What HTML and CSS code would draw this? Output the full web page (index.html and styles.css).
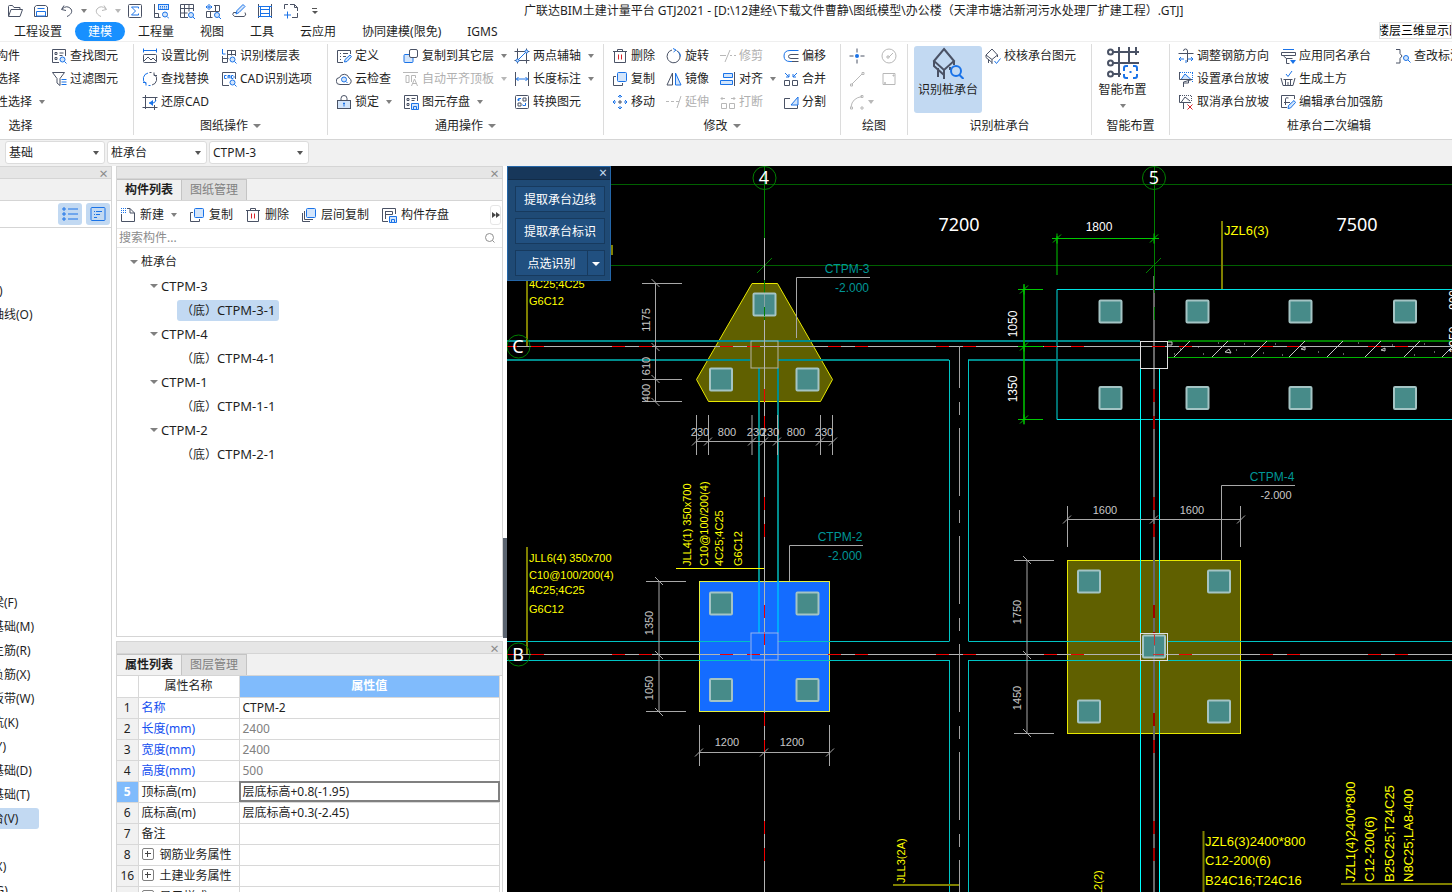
FILE: index.html
```html
<!DOCTYPE html>
<html lang="zh-CN">
<head>
  <meta charset="UTF-8">
  <meta name="viewport" content="width=device-width, initial-scale=1.0">
  <title>广联达BIM土建计量平台 GTJ2021</title>
  <link rel="stylesheet" href="styles.css">
</head>
<body>
  <!-- Icon set -->
  <svg class="defs" aria-hidden="true">
    <symbol id="i-open" viewBox="0 0 16 16"><path class="d" d="M1.5 13V3.500q0-1 1-1h3l1.500 2h6v2M1.500 13.500l2.500-7h11.500l-2.500 7z"/></symbol>
    <symbol id="i-save" viewBox="0 0 16 16"><path class="d" d="M1.500 13V4l2-1.500h9l2 1.500v9.500h-13z"/><path class="b" d="M4.500 5.500h7M3.500 8.500h9v4.500h-9z"/></symbol>
    <symbol id="i-undo" viewBox="0 0 16 16"><path class="d" d="M5 2.500L2.500 6.500l4.500 1M3 6q5-4.500 9 0c2 3-.5 6-4 7.500"/></symbol>
    <symbol id="i-redo" viewBox="0 0 16 16"><path class="d" d="M11 2.500l2.500 4-4.500 1M13 6q-5-4.500-9 0c-2 3 .5 6 4 7.500"/></symbol>
    <symbol id="i-sum" viewBox="0 0 16 16"><rect class="d" x="1.500" y="1.500" width="13" height="13" rx="1"/><path class="b" d="M11.500 5.500v-1.500h-7l4 4-4 4h7v-1.500"/></symbol>
    <symbol id="i-lookgrid" viewBox="0 0 16 16"><path class="d" d="M1.500 1v13.500h6M1.500 10.500h4v4"/><rect class="f" x="5.500" y="1.500" width="10" height="5"/><path class="b" d="M7 3.500h7M7 5h7" stroke-dasharray="1 1"/><circle class="f" cx="12" cy="11.500" r="2.500"/><path class="b" d="M14 13.500l2 2"/></symbol>
    <symbol id="i-grid" viewBox="0 0 16 16"><path class="d" d="M9 14.500H1.500v-13h13V8M1.500 5.500h13M1.500 10h7M5.500 1.500v13M10 1.500v7"/><circle class="f" cx="12" cy="12" r="2.500"/><path class="b" d="M14 14l2 2"/></symbol>
    <symbol id="i-gridplus" viewBox="0 0 16 16"><path class="d" d="M9 2.500h5.500V8M1.500 8.500h13M1.500 8.500v6h6M10.500 2v7M5.500 8.500v6"/><path class="b" d="M1 4h6M4 1v6M2.500 2.500L1 4l1.500 1.500M5.500 2.500L7 4 5.500 5.500"/><circle class="f" cx="12" cy="12" r="2.500"/><path class="b" d="M14 14l2 2"/></symbol>
    <symbol id="i-pen" viewBox="0 0 16 16"><path class="d" d="M5 9.500H2.500q-2 2 1 4h9.500q3-1 1-4"/><path class="f" d="M5 11l1-3.500 6-6 2 2-6 6z"/></symbol>
    <symbol id="i-frame" viewBox="0 0 16 16"><path class="d" d="M1.500 1v14M14.500 1v14"/><path class="b" d="M1 3.500h14M3 6.500h10M3 10.500h10M1 13.500h14M3.500 3v11M12.500 3v11"/></symbol>
    <symbol id="i-region" viewBox="0 0 16 16"><path class="d" d="M1.500 6V1.500H5M7 1.500h4.500l3 3V8M14.500 10v4.500H9M11.500 1.500v3h3"/><path class="b" d="M4.500 8.500v7M1 12h7"/></symbol>
    <symbol id="i-find" viewBox="0 0 16 16"><path class="d" d="M8 14.500H1.500v-13h13V8M4 4.500h2v2H4zM4 9.500h2v2H4zM8.500 5h4M8.500 7.500h3"/><circle class="f" cx="11.500" cy="11.500" r="2.500"/><path class="b" d="M13.500 13.500l2 2"/></symbol>
    <symbol id="i-filter" viewBox="0 0 16 16"><path class="d" d="M1.500 1.500h12L9 7.500v7L6 12V7.500z"/><path class="b" d="M10.500 8.500h5M10.500 11h5M10.500 13.500h5"/></symbol>
    <symbol id="i-scale" viewBox="0 0 16 16"><path class="b" d="M1 2.500h14M1.500.500v4M14.500.500v4"/><rect class="d" x="1.500" y="6.500" width="13" height="8" rx="1"/><path class="d" d="M2 13l4-4 3 3 2-2 3.500 3.500"/></symbol>
    <symbol id="i-floor" viewBox="0 0 16 16"><path class="b" d="M1.500 1v5h3"/><path class="d" d="M1.500 8v6.500h5M1.500 10.500h6M6.500 2v12M6.500 2.500h8V8M6.500 6.500h8M10.500 2.500v5"/><circle class="f" cx="11.500" cy="11.500" r="2.500"/><path class="b" d="M13.500 13.500l2 2"/></symbol>
    <symbol id="i-swap" viewBox="0 0 16 16"><path class="b" d="M6 2A6 6 0 0 0 3.500 12.500M1 11.500h3v3M6.500 14.500h2"/><path class="d" d="M10 14A6 6 0 0 0 12.500 3.500M15 4.500h-3v-3M7.500 1.500h2"/></symbol>
    <symbol id="i-cad" viewBox="0 0 16 16"><path class="d" d="M8 14.500H1.500v-13h13V8"/><path class="b" d="M5.500 4.500h-2v3h2M7 7.500v-3h2v3M7 6h2M10.500 4.500v3h1.500l1-1v-1l-1-1z"/><circle class="f" cx="11.500" cy="11.500" r="2.500"/><path class="b" d="M13.500 13.500l2 2"/></symbol>
    <symbol id="i-restore" viewBox="0 0 16 16"><path class="d" d="M3.500 1v14M.500 3.500h15M13.500 3v4M.500 13.500h15M12.500 11v5"/><path class="b" d="M7 9h4q2 0 3-3"/><path class="s" d="M11 6v6L7 9z"/></symbol>
    <symbol id="i-define" viewBox="0 0 16 16"><path class="d" d="M7 14.500H1.500v-12h13V6M4 5.500h1M7 5.500h5M4 8.500h1M7 8.500h3M4 11.500h1"/><path class="f" d="M8.500 14l.5-2.500 5-4.500 1.500 1.500-4.500 5z"/></symbol>
    <symbol id="i-cloud" viewBox="0 0 16 16"><path class="d" d="M4 13.500a3.500 3.500 0 0 1-.5-7A5 5 0 0 1 13 7a3.500 3.500 0 0 1 0 6.500z"/><circle class="f" cx="8" cy="8.500" r="2.500"/><path class="b" d="M10 10.500l1.500 1.500"/></symbol>
    <symbol id="i-lock" viewBox="0 0 16 16"><path class="d" d="M5 6.500v-2a3 3 0 0 1 6 0v2"/><rect class="d g" x="1.500" y="6.500" width="13" height="8"/><path class="b" d="M8 8.500v4M7 9.500h2"/></symbol>
    <symbol id="i-copyto" viewBox="0 0 16 16"><rect class="f" x="1" y="6.500" width="9" height="8" rx="1"/><rect class="d w" x="6.500" y="1.500" width="8" height="8" rx="1.500"/></symbol>
    <symbol id="i-align-top" viewBox="0 0 16 16"><path class="d" d="M0 1.500h15M3 4.500h3v7H3zM8.500 11V4.500h4V7M8.500 15l3-7 3 7M9.500 12.500h4"/></symbol>
    <symbol id="i-store" viewBox="0 0 16 16"><path class="d" d="M7 14.500H1.500v-13h13V7M4 4.500h2v2H4zM4 9.500h2v2H4zM8.500 4.500h4M8.500 6.500h3"/><path class="f" d="M8.500 9.500h7v6h-7z"/><path class="b" d="M10.500 15v-2.500h3V15"/></symbol>
    <symbol id="i-axis2" viewBox="0 0 16 16"><path class="d" d="M3.500.500v15M.500 3.500h15M12.500.500v15M.500 12.500h15"/><path class="b" d="M3.500 12.500l9-9"/><circle class="f" cx="12.500" cy="3.500" r="1.500"/><circle class="f" cx="3.500" cy="12.500" r="1.500"/></symbol>
    <symbol id="i-length" viewBox="0 0 16 16"><path class="d" d="M1.500 1v14M14.500 1v14"/><path class="b" d="M2 8h12M4.500 6L2.500 8l2 2M11.500 6l2 2-2 2"/></symbol>
    <symbol id="i-convert" viewBox="0 0 16 16"><rect class="d" x="1.500" y="1.500" width="13" height="13" rx="1"/><path class="d" d="M4 9h3v3H4zM9 4h3v3H9z"/><path class="b" d="M4.500 6.500V4.500H7M11.500 9v2.500H9M3.500 5.500l1 1.500 1-1.500M8.500 10.500L9.500 12"/></symbol>
    <symbol id="i-del" viewBox="0 0 16 16"><path class="d" d="M1 3.500h14M5.500 3V1.500h5V3M2.500 4v10.500h11V4"/><path class="r" d="M6.500 6.500v5M9.500 6.500v5"/></symbol>
    <symbol id="i-copy" viewBox="0 0 16 16"><path class="d" d="M4 5.500H1.500v9h9V12"/><rect class="f" x="5.500" y="1.500" width="9" height="9" rx="1"/></symbol>
    <symbol id="i-move" viewBox="0 0 16 16"><path class="b" d="M8 1v3M8 12v3M1 8h3M12 8h3M6 3l2-2 2 2M6 13l2 2 2-2M3 6L1 8l2 2M13 6l2 2-2 2"/><path class="d" d="M8 6v4M6 8h4"/></symbol>
    <symbol id="i-rotate" viewBox="0 0 16 16"><path class="d" d="M10.500 2.500A6.500 6.500 0 1 1 6 2"/><path class="b" d="M7 .500l3 1.500-2.500 2M12 3.500q2.500 2 2.500 5"/></symbol>
    <symbol id="i-mirror" viewBox="0 0 16 16"><path class="d" d="M6.500 2v12H1z"/><path class="f" d="M9.500 2v12H15z"/></symbol>
    <symbol id="i-trim" viewBox="0 0 16 16"><path class="d" d="M0 7.500h6M5 14L10 2M10 7.500h2M14 7.500h2"/></symbol>
    <symbol id="i-extend" viewBox="0 0 16 16"><path class="d" d="M0 7.500h3M5 7.500h3M11 14l4-12M10 7.500h3"/></symbol>
    <symbol id="i-align" viewBox="0 0 16 16"><path class="d" d="M14.500 1v14"/><path class="f" d="M3.500 2.500h9v4h-9zM.500 9.500h12v4H.500z"/></symbol>
    <symbol id="i-break" viewBox="0 0 16 16"><path class="d" d="M1.500 9.500h5v5h-5zM9.500 9.500h5v5h-5zM5 4.500H1M2.500 3L1 4.500 2.500 6M11 4.500h4M13.500 3L15 4.500 13.500 6"/></symbol>
    <symbol id="i-merge" viewBox="0 0 16 16"><path class="d" d="M1.500 9.500h5v5h-5zM9.500 9.500h5v5h-5z"/><path class="b" d="M2 2l4 4M6 3v3H3M14 2l-4 4M10 3v3h3"/></symbol>
    <symbol id="i-offset" viewBox="0 0 16 16"><path class="b" d="M15.500 2.500H7q-6 0-6 5.500t6 5.500h3"/><path class="d" d="M15.500 6.500H8q-2.500 0-2.500 2t2.500 2h7.500M9 13.500h6.500"/></symbol>
    <symbol id="i-split" viewBox="0 0 16 16"><path class="d" d="M7 4.500H1.500v10h13V9"/><path class="f" d="M8 11l7-8v8z"/></symbol>
    <symbol id="i-point" viewBox="0 0 16 16"><path class="d" d="M8 .500v4M8 11.500v4M.500 8h4M11.500 8h4"/><circle class="s" cx="8" cy="8" r="2"/></symbol>
    <symbol id="i-circle" viewBox="0 0 16 16"><circle class="d" cx="8" cy="8" r="7"/><path class="d" d="M8 9l4-4M6 8h2v2H6z"/></symbol>
    <symbol id="i-line" viewBox="0 0 16 16"><path class="d" d="M3 13L13 3M1.500 13h2v2h-2zM13 1.500h2v2h-2z"/></symbol>
    <symbol id="i-rect" viewBox="0 0 16 16"><path class="d" d="M2 2.500h12v11H2zM3.500 11.500h1v1h-1zM12 4h1v1h-1z"/></symbol>
    <symbol id="i-arc" viewBox="0 0 16 16"><path class="d" d="M2 13Q3 4 13 2.500M1.500 13h2v2h-2zM12 1.500h2v2h-2zM12 13h2v2h-2z"/></symbol>
    <symbol id="i-cap" viewBox="0 0 32 32"><path class="d2" d="M12 2l10 12-10 9L2 14zM2 14v5l10 9M22 14v4M12 23v9M6 21v9M18 20v3"/><circle class="b2" cx="24" cy="24" r="5"/><path class="b2" d="M27.500 28l4 4"/></symbol>
    <symbol id="i-check" viewBox="0 0 16 16"><path class="d" d="M7 1l5.500 6L7 11.500 1 7zM1 7v2.500l6 5M12.500 7v2M7 11.500V16M3.500 11v4"/><path class="b" d="M9.500 13l2 2.500 4-5"/></symbol>
    <symbol id="i-smart" viewBox="0 0 32 32"><path class="d2" d="M6 5h26M6 16h26M6 27h8M12 0v30M22 0v15M29 0v8"/><circle class="d2" cx="3.500" cy="5" r="2.500"/><circle class="d2" cx="3.500" cy="16" r="2.500"/><circle class="d2" cx="3.500" cy="27" r="2.500"/><path class="b2" d="M17 24v-3q0-2 2-2h2M26 19h2q2 0 2 2v3M30 27v2q0 2-2 2h-2M21 31h-2q-2 0-2-2v-2M23.500 24v2"/></symbol>
    <symbol id="i-rebar" viewBox="0 0 16 16"><path class="d" d="M.500 5.500h15M5.500 3q0-2 2-2t2 2v11"/><path class="b" d="M1 11h5M3 9l-2 2 2 2M10 11h5M13 9l2 2-2 2M8 12v3"/></symbol>
    <symbol id="i-slope" viewBox="0 0 16 16"><path class="b" d="M2 1.500h13M14.500 2v9" stroke-dasharray="1 1"/><path class="f" d="M3 8.500l4-5.500 6 5.500z"/><path class="d" d="M1.500 1v7.500H14L5.500 11v5M5.500 12h5V9"/></symbol>
    <symbol id="i-unslope" viewBox="0 0 16 16"><path class="d" d="M1.500 1v7.500H13M3 8.500L7 3l5 4M5.500 9v6"/><path class="d" d="M2 1.500h12M13.500 2v6" stroke-dasharray="1 1"/><path class="r" d="M9.500 10.500l5 5M14.500 10.500l-5 5"/></symbol>
    <symbol id="i-apply" viewBox="0 0 16 16"><path class="b" d="M3 1.500h11"/><path class="d" d="M1.500 4.500h14v3h-14zM3.500 8l3 2.500h6M6.500 10v5.500h3"/><path class="s" d="M10 12h6l-3 4z"/></symbol>
    <symbol id="i-earth" viewBox="0 0 16 16"><path class="b" d="M6 3l2 2.500L12 0"/><path class="d" d="M1 7l2 7.500h10L15 7M3.500 8.500h9M5.500 14V9M8 14v-3M10.500 14V9"/></symbol>
    <symbol id="i-edit" viewBox="0 0 16 16"><path class="d" d="M7 13.500H1.500v-12h13V5M4 8.500h6M5.500 11V5q0-2 3-1"/><path class="f" d="M8 14.500l.5-3 5.500-5 1.500 2-5 5.500z"/></symbol>
    <symbol id="i-mark" viewBox="0 0 16 16"><path class="d" d="M1 1.500h4v4l2 2.500-2 2.500V15H1"/><circle class="f" cx="11" cy="10" r="2.500"/><path class="b" d="M13 12l2.500 2.500"/></symbol>
    <symbol id="i-new" viewBox="0 0 16 16"><path class="d" d="M1.500 7v7.500h13V6L10 1.500H7M10 1.500V6h4.500"/><path class="b" d="M1 1.500h5M1 3.500h5M1 5.500h5" stroke-dasharray="1 1"/></symbol>
    <symbol id="i-layers" viewBox="0 0 16 16"><path class="d" d="M1.500 6v8.500H9M3.500 4v8.500H12"/><rect class="f" x="5.500" y="1.500" width="9" height="9" rx="1"/></symbol>
    <symbol id="i-compstore" viewBox="0 0 16 16"><path class="d" d="M7 14.500H1.500v-13h13V7M4.500 4v8M4.500 7.500h7M4.500 4.500h7v3"/><path class="f" d="M8.500 9.500h7v6h-7z"/><path class="b" d="M10.500 15v-2.500h3V15"/></symbol>
    <symbol id="i-list" viewBox="0 0 16 16"><path class="b" d="M1 2h2v2H1zM1 7h2v2H1zM1 12h2v2H1zM6 3h10M6 8h10M6 13h10"/></symbol>
    <symbol id="i-detail" viewBox="0 0 16 16"><rect class="b" x="1" y="1.500" width="14" height="13" rx="1"/><path class="b" d="M4 5.500h1M6 5.500h6M4 8.500h1M6 8.500h4M4 11.500h3"/></symbol>
    <symbol id="i-search" viewBox="0 0 16 16"><circle class="d" cx="7.500" cy="7.500" r="4"/><path class="d" d="M10.500 10.500l2 2"/></symbol>
  </svg>

  <header class="titlebar">
    <div class="quick">
      <button aria-label="打开"><svg><use href="#i-open"/></svg></button>
      <button aria-label="保存"><svg><use href="#i-save"/></svg></button>
      <button aria-label="撤销"><svg><use href="#i-undo"/></svg></button>
      <i class="caret"></i>
      <button aria-label="恢复" class="off"><svg><use href="#i-redo"/></svg></button>
      <i class="caret off"></i>
      <button aria-label="汇总"><svg><use href="#i-sum"/></svg></button>
      <button aria-label="查看工程量"><svg><use href="#i-lookgrid"/></svg></button>
      <button aria-label="查看报表"><svg><use href="#i-grid"/></svg></button>
      <button aria-label="查看计算式"><svg><use href="#i-gridplus"/></svg></button>
      <button aria-label="编辑"><svg><use href="#i-pen"/></svg></button>
      <button aria-label="钢筋三维"><svg><use href="#i-frame"/></svg></button>
      <button aria-label="区域"><svg><use href="#i-region"/></svg></button>
      <i class="more"></i>
    </div>
    <h1 class="title">广联达BIM土建计量平台 GTJ2021 - [D:\12建经\下载文件曹静\图纸模型\办公楼（天津市塘沽新河污水处理厂扩建工程）.GTJ]</h1>
  </header>

  <nav class="tabs">
    <button>工程设置</button>
    <button class="active">建模</button>
    <button>工程量</button>
    <button>视图</button>
    <button>工具</button>
    <button>云应用</button>
    <button>协同建模(限免)</button>
    <button>IGMS</button>
    <div class="tip"><span>楼层三维显示图</span></div>
  </nav>

  <section class="ribbon">
    <div class="group g-select">
      <div class="tools">
        <button>构件</button>
        <button><svg><use href="#i-find"/></svg>查找图元</button>
        <button>选择</button>
        <button><svg><use href="#i-filter"/></svg>过滤图元</button>
        <button>性选择<i class="caret"></i></button>
      </div>
      <div class="label">选择</div>
    </div>
    <div class="group g-drawing">
      <div class="tools">
        <button><svg><use href="#i-scale"/></svg>设置比例</button>
        <button><svg><use href="#i-floor"/></svg>识别楼层表</button>
        <button><svg><use href="#i-swap"/></svg>查找替换</button>
        <button><svg><use href="#i-cad"/></svg>CAD识别选项</button>
        <button><svg><use href="#i-restore"/></svg>还原CAD</button>
      </div>
      <div class="label">图纸操作<i class="caret"></i></div>
    </div>
    <div class="group g-common">
      <div class="tools">
        <button><svg><use href="#i-define"/></svg>定义</button>
        <button><svg><use href="#i-copyto"/></svg>复制到其它层<i class="caret"></i></button>
        <button><svg><use href="#i-axis2"/></svg>两点辅轴<i class="caret"></i></button>
        <button><svg><use href="#i-cloud"/></svg>云检查</button>
        <button class="off"><svg><use href="#i-align-top"/></svg>自动平齐顶板<i class="caret"></i></button>
        <button><svg><use href="#i-length"/></svg>长度标注<i class="caret"></i></button>
        <button><svg><use href="#i-lock"/></svg>锁定<i class="caret"></i></button>
        <button><svg><use href="#i-store"/></svg>图元存盘<i class="caret"></i></button>
        <button><svg><use href="#i-convert"/></svg>转换图元</button>
      </div>
      <div class="label">通用操作<i class="caret"></i></div>
    </div>
    <div class="group g-modify">
      <div class="tools">
        <button><svg><use href="#i-del"/></svg>删除</button>
        <button><svg><use href="#i-rotate"/></svg>旋转</button>
        <button class="off"><svg><use href="#i-trim"/></svg>修剪</button>
        <button><svg><use href="#i-offset"/></svg>偏移</button>
        <button><svg><use href="#i-copy"/></svg>复制</button>
        <button><svg><use href="#i-mirror"/></svg>镜像</button>
        <button><svg><use href="#i-align"/></svg>对齐<i class="caret"></i></button>
        <button><svg><use href="#i-merge"/></svg>合并</button>
        <button><svg><use href="#i-move"/></svg>移动</button>
        <button class="off"><svg><use href="#i-extend"/></svg>延伸</button>
        <button class="off"><svg><use href="#i-break"/></svg>打断</button>
        <button><svg><use href="#i-split"/></svg>分割</button>
      </div>
      <div class="label">修改<i class="caret"></i></div>
    </div>
    <div class="group g-draw">
      <div class="tools">
        <button aria-label="点"><svg><use href="#i-point"/></svg></button>
        <button aria-label="圆" class="off"><svg><use href="#i-circle"/></svg></button>
        <button aria-label="直线" class="off"><svg><use href="#i-line"/></svg></button>
        <button aria-label="矩形" class="off"><svg><use href="#i-rect"/></svg></button>
        <button aria-label="弧" class="off"><svg><use href="#i-arc"/></svg><i class="caret tight"></i></button>
      </div>
      <div class="label">绘图</div>
    </div>
    <div class="group g-identify">
      <div class="tools">
        <button class="big active"><svg><use href="#i-cap"/></svg>识别桩承台</button>
        <button><svg><use href="#i-check"/></svg>校核承台图元</button>
      </div>
      <div class="label">识别桩承台</div>
    </div>
    <div class="group g-smart">
      <div class="tools">
        <button class="big"><svg><use href="#i-smart"/></svg>智能布置<i class="caret"></i></button>
      </div>
      <div class="label">智能布置</div>
    </div>
    <div class="group g-cap">
      <div class="tools">
        <button><svg><use href="#i-rebar"/></svg>调整钢筋方向</button>
        <button><svg><use href="#i-apply"/></svg>应用同名承台</button>
        <button><svg><use href="#i-mark"/></svg>查改标注</button>
        <button><svg><use href="#i-slope"/></svg>设置承台放坡</button>
        <button><svg><use href="#i-earth"/></svg>生成土方</button>
        <span></span>
        <button><svg><use href="#i-unslope"/></svg>取消承台放坡</button>
        <button><svg><use href="#i-edit"/></svg>编辑承台加强筋</button>
      </div>
      <div class="label">桩承台二次编辑</div>
    </div>
  </section>

  <div class="selectors">
    <select aria-label="构件大类"><option>基础</option></select>
    <select aria-label="构件类型"><option>桩承台</option></select>
    <select aria-label="构件名称"><option>CTPM-3</option></select>
  </div>

  <main class="workspace">
    <aside class="nav panel">
      <div class="panel-bar"><button aria-label="关闭">×</button></div>
      <div class="nav-band"></div>
      <div class="nav-tools">
        <button aria-label="列表"><svg><use href="#i-list"/></svg></button>
        <button aria-label="详情"><svg><use href="#i-detail"/></svg></button>
      </div>
      <ul class="nav-list">
        <li>轴网(J)</li>
        <li>辅助轴线(O)</li>
      </ul>
      <ul class="nav-list base">
        <li>基础梁(F)</li>
        <li>筏板基础(M)</li>
        <li>筏板主筋(R)</li>
        <li>筏板负筋(X)</li>
        <li>基础板带(W)</li>
        <li>集水坑(K)</li>
        <li>柱墩(Y)</li>
        <li>独立基础(D)</li>
        <li>条形基础(T)</li>
        <li class="current"><span>桩承台(V)</span></li>
        <li></li>
        <li>垫层(X)</li>
        <li>地沟(G)</li>
      </ul>
    </aside>

    <div class="side">
      <section class="panel components">
        <div class="panel-bar"><button aria-label="关闭">×</button></div>
        <div class="panel-tabs"><button class="active">构件列表</button><button>图纸管理</button></div>
        <div class="panel-tools">
          <button><svg><use href="#i-new"/></svg>新建<i class="caret"></i></button>
          <button><svg><use href="#i-copy"/></svg>复制</button>
          <button><svg><use href="#i-del"/></svg>删除</button>
          <button><svg><use href="#i-layers"/></svg>层间复制</button>
          <button><svg><use href="#i-compstore"/></svg>构件存盘</button>
          <button class="overflow" aria-label="更多"><i></i><i></i></button>
        </div>
        <div class="search">
          <input type="text" aria-label="搜索构件" placeholder="搜索构件...">
          <svg><use href="#i-search"/></svg>
        </div>
        <ul class="tree">
          <li><i class="caret"></i>桩承台</li>
          <li class="lv2"><i class="caret"></i>CTPM-3</li>
          <li class="lv3 current"><span><small>（底）</small>CTPM-3-1</span></li>
          <li class="lv2"><i class="caret"></i>CTPM-4</li>
          <li class="lv3"><span><small>（底）</small>CTPM-4-1</span></li>
          <li class="lv2"><i class="caret"></i>CTPM-1</li>
          <li class="lv3"><span><small>（底）</small>CTPM-1-1</span></li>
          <li class="lv2"><i class="caret"></i>CTPM-2</li>
          <li class="lv3"><span><small>（底）</small>CTPM-2-1</span></li>
        </ul>
      </section>

      <section class="panel props">
        <div class="panel-bar"><button aria-label="关闭">×</button></div>
        <div class="panel-tabs"><button class="active">属性列表</button><button>图层管理</button></div>
        <table>
          <thead>
            <tr><th class="num"></th><th class="name">属性名称</th><th class="value">属性值</th></tr>
          </thead>
          <tbody>
            <tr><th>1</th><td class="key">名称</td><td>CTPM-2</td></tr>
            <tr><th>2</th><td class="key">长度(mm)</td><td class="ro">2400</td></tr>
            <tr><th>3</th><td class="key">宽度(mm)</td><td class="ro">2400</td></tr>
            <tr><th>4</th><td class="key">高度(mm)</td><td class="ro">500</td></tr>
            <tr class="current"><th>5</th><td>顶标高(m)</td><td class="editing">层底标高+0.8(-1.95)</td></tr>
            <tr><th>6</th><td>底标高(m)</td><td>层底标高+0.3(-2.45)</td></tr>
            <tr><th>7</th><td>备注</td><td></td></tr>
            <tr><th>8</th><td><button class="plus" aria-label="展开"></button>钢筋业务属性</td><td></td></tr>
            <tr><th>16</th><td><button class="plus" aria-label="展开"></button>土建业务属性</td><td></td></tr>
            <tr><th></th><td><button class="plus" aria-label="展开"></button>显示样式</td><td></td></tr>
          </tbody>
        </table>
      </section>
    </div>

    <div class="splitter"><div class="handle"></div></div>

    <section class="canvas">
      <svg class="cad" viewBox="507 166 945 726" preserveAspectRatio="xMinYMin slice">
        <defs>
          <marker id="tick-h" markerUnits="userSpaceOnUse" markerWidth="12" markerHeight="12" refX="6" refY="6"><path class="tick" d="M2 10L10 2"/></marker>
          <marker id="tick-v" markerUnits="userSpaceOnUse" markerWidth="12" markerHeight="12" refX="6" refY="6"><path class="tick" d="M2 2L10 10"/></marker>
          <marker id="tick-g" markerUnits="userSpaceOnUse" markerWidth="12" markerHeight="12" refX="6" refY="6"><path class="tick-green" d="M2 10L10 2M1 6h10M6 1v10"/></marker>
          <rect id="pile" class="pile" x="-11" y="-11" width="22" height="22" rx="1"/>
        </defs>

        <!-- dimension axes along the top -->
        <path class="axis-dim" d="M507 184.500H1452M507 265.500H1452"/>
        <path class="axis-tick" d="M757 273l15-15M1146 273l15-15"/>
        <path class="axis-green" d="M764.500 166V240M1154.500 166V290"/>

        <!-- pile caps -->
        <path class="cap" d="M752 283.500H777.500L832.500 379.500L820.500 401.500H708.500L696.500 379.500Z"/>
        <rect class="cap" x="1067.500" y="560.500" width="173" height="173"/>
        <rect class="cap-selected" x="699.500" y="581.500" width="130" height="130"/>
        <path class="cap-outline" d="M1452 289.500H1057V419.500H1452"/>

        <!-- beams -->
        <path class="beam-dim" d="M507 341H1140M507 360H750M778 360H949M968 360H1140M759 368V581M778 368V581"/>
        <path class="beam" d="M507 641.500H750M778 641.500H949.500M968.500 641.500H1140M1168 641.500H1452M507 660.500H750M778 660.500H949.500M968.500 660.500H1140M1168 660.500H1452M949.500 360V641M968.500 360V641M949.500 660V892M968.500 660V892"/>
        <path class="beam-over" d="M759 581V633M778 581V633"/>
        <path class="beam-lit" d="M1140.500 368V633M1159.500 368V633M1140.500 660V892M1159.500 660V892"/>

        <!-- axes B, C, 4, 5 -->
        <path class="axis" d="M507 346.500H1452M507 654.500H1452M764.500 238V892"/>
        <path class="axis-thick" d="M1154 276V892"/>
        <path class="axis-mid" d="M959.500 346V892"/>
        <path class="axis-green" d="M764.500 280V293M764.500 307V320M1154.500 276V293M1154.500 307V320"/>
        <path class="axis-red" d="M504 346.500H1452M504 654.500H1452M764.500 389V892"/>
        <path class="axis-red deep" d="M1154 389V892"/>

        <!-- concrete wall -->
        <path class="wall-top" d="M1168 341H1452"/>
        <path class="wall-bottom" d="M1168 357.500H1452"/>
        <path class="hatch" d="M1174 357l16-16M1212 357l16-16M1251 357l16-16M1289 357l16-16M1327 357l16-16M1365 357l16-16M1404 357l16-16M1442 357l10-10M1225 352l4-3 2 4zM1301 349l4-2v3zM1381 350l4-2v3zM1168 342h4v3h-4"/>
        <path class="dots" d="M1180 349h1M1203 354h1M1218 343h1M1236 350h1M1244 344h1M1275 344h1M1282 355h1M1318 352h1M1343 354h1M1358 343h1M1392 345h1M1424 344h1M1434 352h1M1174 354h1M1198 347h1M1263 353h1M1414 355h1"/>

        <!-- columns -->
        <rect class="column soft" x="751" y="341" width="27" height="27"/>
        <rect class="column pale" x="751" y="633" width="27" height="27"/>
        <rect class="column" x="1140.500" y="341.500" width="27" height="27"/>

        <!-- piles -->
        <g>
          <use href="#pile" x="764.500" y="304.500"/><use href="#pile" x="721" y="379.500"/><use href="#pile" x="807.500" y="379.500"/>
          <use href="#pile" x="721" y="603.500"/><use href="#pile" x="807.500" y="603.500"/>
          <use href="#pile" x="721" y="690"/><use href="#pile" x="807.500" y="690"/>
          <use href="#pile" x="1110.500" y="311.500"/><use href="#pile" x="1197.500" y="311.500"/><use href="#pile" x="1300.500" y="311.500"/><use href="#pile" x="1405" y="311.500"/>
          <use href="#pile" x="1110.500" y="398"/><use href="#pile" x="1197.500" y="398"/><use href="#pile" x="1300.500" y="398"/><use href="#pile" x="1405" y="398"/>
          <use href="#pile" x="1089" y="581.500"/><use href="#pile" x="1219" y="581.500"/>
          <use href="#pile" x="1089" y="711.500"/><use href="#pile" x="1219" y="711.500"/>
          <use href="#pile" x="1154" y="646.500"/>
        </g>
        <rect class="column" x="1140.500" y="633.500" width="27" height="27"/>
        <path class="axis faint" d="M764.500 293V316M1154.500 646V658"/>
        <path class="axis-green" d="M764.500 307V316"/>
        <path class="axis-over" d="M1154.500 635V645M1153 654.500H1164"/>

        <!-- dimension lines -->
        <g class="dim">
          <path class="v" d="M655.500 283V347V379V402"/>
          <path d="M642 283.500h40M642 379.500h40M642 401.500h40"/>
          <path class="h" d="M696 441.500H708H752H764H777H820H833"/>
          <path d="M696.500 415v40M708.500 415v40M752 415v40M777.500 415v40M820.500 415v40M832.500 415v40"/>
          <path class="v" d="M659 581V655V712"/>
          <path d="M646 581.500h40M646 711.500h40"/>
          <path class="h" d="M699 752.500H764H830"/>
          <path d="M699.500 725v41M829.500 725v41"/>
          <path class="h" d="M1067 519.500H1154H1241"/>
          <path d="M1067.500 506v41M1240.500 506v41"/>
          <path class="v" d="M1027 560V655V733"/>
          <path d="M1014 560.500h40M1014 733.500h40"/>
          <path d="M796.500 338V277.500H870M789.500 581V545.500H863M1221.500 560V485.500H1295"/>
        </g>
        <g class="dim-green">
          <path class="h" d="M1057 238.500H1154"/>
          <path d="M1057 236V275"/>
          <path class="h" d="M1024 289.500V346.500V419.500"/>
          <path d="M1018 289.500h25M1018 346.500h25M1018 419.500h25M1024 284V424"/>
        </g>
        <g class="leader">
          <path class="dim-yellow" d="M527 281V346M527 547V654M1222 221V289M1203.500 831V892M1341 884H1452M893 885H959M612 245v10"/>
          <path class="lit" d="M676 568.500H764"/>
        </g>

        <!-- axis bubbles -->
        <g class="bubble">
          <circle cx="764.500" cy="178" r="11.500"/><circle cx="1154" cy="178" r="11.500"/>
          <circle cx="518.500" cy="346.500" r="11.500"/><circle cx="518.500" cy="654.500" r="11.500"/>
          <text x="764" y="184">4</text><text x="1154" y="184">5</text>
          <text x="518" y="353">C</text><text x="518" y="661">B</text>
        </g>
        <g class="span">
          <text x="959" y="231">7200</text><text x="1357" y="231">7500</text>
        </g>

        <!-- dimension texts -->
        <g class="num-text">
          <text x="700" y="436">230</text><text x="727" y="436">800</text><text x="756" y="436">230</text>
          <text x="770" y="436">230</text><text x="796" y="436">800</text><text x="824" y="436">230</text>
          <text x="727" y="746">1200</text><text x="792" y="746">1200</text>
          <text x="1105" y="514">1600</text><text x="1192" y="514">1600</text>
          <text x="1276" y="499">-2.000</text>
          <text transform="translate(650 320) rotate(-90)">1175</text>
          <text transform="translate(650 366) rotate(-90)">610</text>
          <text transform="translate(650 393) rotate(-90)">400</text>
          <text transform="translate(653 623) rotate(-90)">1350</text>
          <text transform="translate(653 688) rotate(-90)">1050</text>
          <text transform="translate(1021 612) rotate(-90)">1750</text>
          <text transform="translate(1021 698) rotate(-90)">1450</text>
        </g>
        <g class="num-text lit">
          <text x="1099" y="231">1800</text>
          <text transform="translate(1017 324) rotate(-90)">1050</text>
          <text transform="translate(1017 389) rotate(-90)">1350</text>
          <text transform="translate(1458 300) rotate(-90)">800</text>
          <text transform="translate(1458 340) rotate(-90)">1050</text>
        </g>
        <g class="cap-name">
          <text x="847" y="273">CTPM-3</text><text x="852" y="292">-2.000</text>
          <text x="840" y="541">CTPM-2</text><text x="845" y="560">-2.000</text>
          <text x="1272" y="481">CTPM-4</text>
        </g>
        <g class="note">
          <text x="529" y="288">4C25;4C25</text><text x="529" y="305">G6C12</text>
          <text x="529" y="562">JLL6(4) 350x700</text><text x="529" y="579">C10@100/200(4)</text>
          <text x="529" y="594">4C25;4C25</text><text x="529" y="613">G6C12</text>
          <text transform="translate(691 566) rotate(-90)">JLL4(1) 350x700</text>
          <text transform="translate(708 566) rotate(-90)">C10@100/200(4)</text>
          <text transform="translate(723 566) rotate(-90)">4C25;4C25</text>
          <text transform="translate(742 566) rotate(-90)">G6C12</text>
          <text transform="translate(905 883) rotate(-90)">JLL3(2A)</text>
          <text transform="translate(1102 896) rotate(-90)">L2(2)</text>
        </g>
        <g class="note large">
          <text x="1224" y="235">JZL6(3)</text>
          <text x="1205" y="846">JZL6(3)2400*800</text><text x="1205" y="865">C12-200(6)</text><text x="1205" y="885">B24C16;T24C16</text>
          <text transform="translate(1355 882) rotate(-90)">JZL1(4)2400*800</text>
          <text transform="translate(1374 882) rotate(-90)">C12-200(6)</text>
          <text transform="translate(1394 882) rotate(-90)">B25C25;T24C25</text>
          <text transform="translate(1413 882) rotate(-90)">N8C25;LA8-400</text>
        </g>
      </svg>

      <div class="float">
        <div class="float-bar"><button aria-label="关闭">×</button></div>
        <div class="float-body">
          <button>提取承台边线</button>
          <button>提取承台标识</button>
          <div class="split"><button>点选识别</button><button aria-label="展开"><i class="caret"></i></button></div>
        </div>
      </div>
    </section>
  </main>
</body>
</html>
```

FILE: styles.css
```css
:root {
  --ink: #4a5265;
  --blue: #1a73e8;
  --pale: #d3e5fb;
  --red: #d8232a;
  --line: #d5d5d5;
  --hover: #c2d9f2;
}
* {
  box-sizing: border-box;
}
body {
  margin: 0;
  height: 100vh;
  display: flex;
  flex-direction: column;
  overflow: hidden;
  background: #fff;
  color: #1f1f1f;
  font: 12px/16px "Noto Sans", "Noto Sans CJK SC", sans-serif;
}
button, input, select {
  font: inherit;
  color: inherit;
}
button {
  display: flex;
  align-items: center;
  padding: 0;
  border: 0;
  background: none;
  white-space: nowrap;
}
ul {
  list-style: none;
  margin: 0;
  padding: 0;
}
svg {
  display: block;
  width: 16px;
  height: 16px;
  flex: none;
}
.defs {
  position: absolute;
  width: 0;
  height: 0;
}

/* icon strokes */
.d, .b, .r, .f, .d2, .b2 {
  fill: none;
  stroke: var(--ink);
}
.b, .f, .b2 {
  stroke: var(--blue);
}
.f, .g {
  fill: var(--pale);
}
.w {
  fill: #fff;
}
.r {
  stroke: var(--red);
}
.s {
  fill: var(--blue);
}
.d2, .b2 {
  stroke-width: 2;
}
.off {
  --ink: #b8b8b8;
  color: #b0b0b0;
}
.caret {
  flex: none;
  border: 3px solid transparent;
  border-top: 4px solid #808080;
  border-bottom: 0;
}
.off .caret, .caret.off {
  border-top-color: #b8b8b8;
}

/* title bar */
.titlebar {
  display: flex;
  flex: 0 0 21px;
}
.quick {
  flex: 0 0 524px;
  display: flex;
  align-items: center;
  padding-left: 2px;
}
.quick button {
  padding: 0 5px;
}
.quick .caret {
  margin: 0 1px;
}
.quick .more {
  margin-left: 7px;
  width: 7px;
  height: 6px;
  background: linear-gradient(#555, #555) top / 5px 1px no-repeat;
  display: flex;
  align-items: flex-end;
  justify-content: center;
}
.more::after {
  content: "";
  border: 3px solid transparent;
  border-top: 3px solid #555;
  border-bottom: 0;
}
.title {
  margin: 0;
  font-size: 12px;
  font-weight: 400;
  line-height: 21px;
  white-space: nowrap;
}

/* menu tabs */
.tabs {
  display: flex;
  flex: 0 0 21px;
  padding: 1px 0 0 1px;
  border-bottom: 1px solid #efefef;
}
.tabs button {
  padding: 0 13px;
}
.tabs .active {
  border-radius: 10px;
  background: #1890ff;
  color: #fff;
}
.tip {
  width: 73px;
  margin-left: auto;
  height: 17px;
  padding-left: 1px;
  border: 1px solid #e0e0e0;
  color: #000;
  white-space: nowrap;
  overflow: hidden;
}
.tip span {
  margin-left: -4px;
}

/* ribbon */
.ribbon {
  display: flex;
  flex: 0 0 98px;
  padding-top: 2px;
  border-bottom: 1px solid var(--line);
  margin-left: -92px;
}
.group {
  flex: none;
  display: flex;
  flex-direction: column;
  justify-content: space-between;
  padding: 0 0 2px 8px;
  border-right: 1px solid #dcdcdc;
  margin-bottom: 4px;
}
.group:last-child {
  border-right: 0;
}
.tools {
  display: grid;
  grid-auto-rows: 23px;
}
.tools button {
  gap: 3px;
}
.tools .caret {
  margin-left: 4px;
}
.tools .caret.tight {
  margin-left: 0;
}
.label {
  display: flex;
  align-items: center;
  justify-content: center;
  gap: 5px;
  margin-left: -8px;
  line-height: 15px;
}
.label .caret {
  border-width: 4px 4px 0;
}
.g-select {
  width: 226px;
}
.g-select .tools {
  grid-template-columns: 55px 1fr;
  padding-left: 80px;
}
.g-drawing {
  width: 194px;
}
.g-drawing .tools {
  grid-template-columns: 79px 1fr;
}
.g-common {
  width: 276px;
}
.g-common .tools {
  grid-template-columns: 67px 111px 1fr;
}
.g-modify {
  width: 237px;
}
.g-modify .tools {
  grid-template-columns: 54px 54px 63px 1fr;
}
.g-draw {
  width: 67px;
}
.g-draw .tools {
  grid-template-columns: 32px 1fr;
}
.g-identify {
  width: 184px;
  padding-left: 6px;
}
.g-identify .tools {
  grid-template-columns: 68px 1fr;
  column-gap: 3px;
}
.g-identify .label {
  margin-left: -6px;
}
.g-smart {
  width: 78px;
  padding-left: 0;
}
.g-smart .label {
  margin-left: 0;
}
.g-smart .tools {
  padding-right: 16px;
}
.g-cap {
  width: 318px;
}
.g-cap .tools {
  grid-template-columns: 102px 115px 1fr;
}
.tools .big {
  grid-row: span 3;
  flex-direction: column;
  justify-content: flex-start;
  height: 67px;
  margin-top: 2px;
  padding-top: 1px;
  border-radius: 3px;
}
.big svg {
  width: 32px;
  height: 32px;
}
.big .caret {
  margin: 3px 0 0;
}
.big.active {
  background: var(--hover);
}

/* component selectors */
.selectors {
  display: flex;
  gap: 2px;
  flex: 0 0 26px;
  padding: 1px 5px 2px;
  background: #f1f1f1;
}
.selectors select {
  appearance: none;
  width: 100px;
  height: 23px;
  padding: 0 3px;
  border: 1px solid #dcdcdc;
  border-radius: 3px;
  background: #fff url("data:image/svg+xml,%3Csvg xmlns='http://www.w3.org/2000/svg' width='6' height='4'%3E%3Cpath d='M0 0h6L3 4z' fill='%23555'/%3E%3C/svg%3E") no-repeat right 5px center;
}

/* docked panels */
.workspace {
  flex: 1;
  display: flex;
  min-height: 0;
}
.panel {
  border: 1px solid var(--line);
  background: #fff;
  overflow: hidden;
}
.panel-bar {
  display: flex;
  justify-content: flex-end;
  height: 12px;
  padding-right: 2px;
  background: #e6e6e6;
  border-bottom: 1px solid var(--line);
}
.panel-bar button {
  width: 11px;
  justify-content: center;
  font-size: 15px;
  line-height: 10px;
  color: #8a8a8a;
}
.nav {
  flex: 0 0 112px;
  border-left: 0;
  border-bottom: 0;
}
.nav-band {
  height: 22px;
  background: #f1f1f1;
  border-bottom: 1px solid var(--line);
}
.nav-tools {
  display: flex;
  justify-content: flex-end;
  gap: 4px;
  height: 27px;
  padding: 2px 1px;
  border-bottom: 1px solid var(--line);
}
.nav-tools button {
  width: 24px;
  height: 22px;
  justify-content: center;
  border-radius: 3px;
  background: var(--hover);
}
.nav-list {
  padding-top: 51px;
  margin-left: -32px;
  line-height: 24px;
  white-space: nowrap;
}
.nav-list li {
  height: 24px;
}
.nav-list.base {
  padding-top: 264px;
}
.nav-list .current span {
  display: inline-block;
  width: 71px;
  line-height: 21px;
  border-radius: 3px;
  background: var(--hover);
}
.side {
  flex: 0 0 387px;
  margin-left: 4px;
  display: flex;
  flex-direction: column;
  gap: 4px;
}
.components {
  flex: 1;
}
.props {
  flex: 0 0 251px;
  border-bottom: 0;
}
.panel-tabs {
  display: flex;
  height: 22px;
  background: #f1f1f1;
  border-bottom: 1px solid var(--line);
}
.panel-tabs button {
  width: 65px;
  justify-content: center;
  border-right: 1px solid #c4c4c4;
  border-top: 1px solid #c4c4c4;
  background: #e0e0e0;
  color: #808080;
}
.panel-tabs .active {
  background: #f1f1f1;
  color: #1f1f1f;
  font-weight: 700;
}
.panel-tools {
  display: flex;
  gap: 13px;
  height: 28px;
  padding: 1px 0 0 3px;
  border-bottom: 1px solid #e6e6e6;
}
.panel-tools button {
  gap: 4px;
}
.panel-tools button + button {
  margin-left: -1px;
}
.panel-tools .caret {
  margin-left: 3px;
}
.panel-tools .overflow {
  width: 11px;
  height: 20px;
  margin: 3px 1px 0 auto;
  gap: 0;
  justify-content: center;
  border: 1px solid #e6e6e6;
  border-radius: 3px;
}
.overflow i {
  border: 3px solid transparent;
  border-left: 4px solid #444;
  border-right: 0;
}
.search {
  display: flex;
  align-items: center;
  height: 19px;
  padding: 0 4px 0 0;
  border-bottom: 1px solid #e6e6e6;
  --ink: #909090;
}
.search input {
  flex: 1;
  padding: 0 2px;
  border: 0;
  outline: 0;
  background: none;
}
.search input::placeholder {
  color: #8c8c8c;
}
.tree {
  padding: 2px 0 0 13px;
}
.tree li {
  display: flex;
  align-items: center;
  gap: 3px;
  height: 24px;
}
.tree .caret {
  border-width: 4px 4px 0;
}
.tree .lv2, .tree .lv3 {
  padding-left: 20px;
  font-size: 13px;
}
.tree .lv3 {
  padding-left: 47px;
}
.tree .lv3 span {
  padding: 0 4px;
  line-height: 21px;
  border-radius: 3px;
}
.tree small {
  font-size: 12px;
}
.tree .current span {
  background: var(--hover);
}

/* property grid */
table {
  width: 383px;
  table-layout: fixed;
  border-collapse: collapse;
}
th, td {
  height: 21px;
  padding: 0 3px;
  border: 1px solid #d8d8d8;
  border-left: 0;
  border-top: 0;
  text-align: left;
  font-weight: 400;
  white-space: nowrap;
}
tbody th, thead th {
  text-align: center;
  padding: 0;
}
tbody th {
  background: #f1f1f1;
}
.num {
  width: 21px;
}
.name {
  width: 101px;
}
thead .value {
  background: #80bbfc;
  color: #fff;
  font-weight: 700;
}
.key {
  color: #1450f0;
}
.ro {
  color: #808080;
}
tr.current th {
  background: #80bbfc;
  color: #fff;
  font-weight: 700;
}
.editing {
  outline: 2px solid #808080;
  outline-offset: -2px;
}
.plus {
  display: inline-block;
  width: 12px;
  height: 12px;
  margin-right: 6px;
  border: 1px solid #808080;
  border-radius: 2px;
  background: linear-gradient(#444, #444) center / 6px 1px no-repeat, linear-gradient(#444, #444) center / 1px 6px no-repeat;
}
.splitter {
  flex: 0 0 4px;
}
.handle {
  height: 100px;
  margin-top: 372px;
  background: #5b6470;
}

/* drawing area */
.canvas {
  position: relative;
  flex: 1;
  min-width: 0;
  background: #000;
  overflow: hidden;
}
.cad {
  width: 100%;
  height: 100%;
  font-family: "Liberation Sans Narrow", "Liberation Sans", sans-serif;
}
.cad path, .cad circle {
  fill: none;
}
.axis-dim {
  stroke: #006000;
}
.axis-tick, .axis-green, .bubble circle {
  stroke: #008000;
}
.cap {
  stroke: #e8e800;
}
.cad .cap {
  fill: #606000;
}
.cap-selected {
  fill: #146cff;
  stroke: #e6f03c;
}
.cap-outline {
  stroke: #00e0e0;
}
.beam-dim {
  stroke: #008c8c;
  stroke-width: 2;
}
.beam {
  stroke: #00c4c4;
}
.beam-over {
  stroke: #00a8ff;
  stroke-width: 2;
}
.beam-lit {
  stroke: #00ffff;
}
.axis {
  stroke: #b4b4b4;
}
.axis.faint {
  opacity: 0.6;
}
.axis-thick {
  stroke: #686868;
  stroke-width: 2;
}
.axis-mid {
  stroke: #a0a0a0;
  stroke-dasharray: 68 14 13 13;
  stroke-dashoffset: 26;
}
.axis-red {
  stroke: #f00000;
  stroke-dasharray: 13 14 13 68;
}
.axis-red.deep {
  stroke: #a00000;
  stroke-width: 2;
}
.axis-over {
  stroke: #c83232;
}
.wall-top {
  stroke: #008000;
  stroke-width: 2;
}
.wall-bottom {
  stroke: #00b400;
}
.hatch, .dots {
  stroke: #c8c8c8;
}
.column {
  fill: none;
  stroke: #e0e0e0;
}
.column.soft {
  stroke: #b4b4a0;
}
.column.pale {
  stroke: #96b4f0;
}
.pile {
  fill: #478b89;
  stroke: #a4c4c4;
  stroke-width: 2;
}
.dim path, .tick {
  stroke: #a8a8a8;
}
.dim .h {
  marker: url(#tick-h);
}
.dim .v {
  marker: url(#tick-v);
}
.dim-green path, .tick-green {
  stroke: #00c800;
}
.dim-green .h {
  marker: url(#tick-g);
}
.dim-yellow {
  stroke: #808000;
  stroke-width: 2;
}
.leader .lit {
  stroke: #ffff00;
}
.bubble text, .span text {
  fill: #fff;
  font: 18px "Noto Sans", sans-serif;
  text-anchor: middle;
}
.num-text {
  fill: #c8c8c8;
  font-size: 11px;
  text-anchor: middle;
}
.num-text.lit {
  fill: #fff;
  font-size: 12px;
}
.cap-name {
  fill: #009696;
  font-size: 12px;
  text-anchor: middle;
}
.note {
  fill: #ffff00;
  font-size: 11px;
}
.note.large {
  font-size: 13px;
}

/* floating recognition panel */
.float {
  position: absolute;
  left: 0;
  top: 0;
  width: 104px;
  border: 1px solid #2466a8;
  background: #1f4a75;
  color: #fff;
}
.float-bar {
  display: flex;
  justify-content: flex-end;
  height: 13px;
  padding-right: 3px;
  background: #17375a;
  border-bottom: 1px solid #122c48;
}
.float-bar button {
  font-size: 14px;
  line-height: 12px;
  color: #c8dcf0;
}
.float-body {
  display: flex;
  flex-direction: column;
  gap: 6px;
  padding: 6px 5px 4px 7px;
}
.float-body button {
  height: 26px;
  justify-content: center;
  padding-top: 1px;
  border: 1px solid #173a5e;
  background: #215080;
}
.split {
  display: flex;
}
.split button:first-child {
  flex: 1;
}
.split button:last-child {
  width: 17px;
  border-left: 0;
}
.split .caret {
  border-width: 4px 4px 0;
  border-top-color: #fff;
}
```
